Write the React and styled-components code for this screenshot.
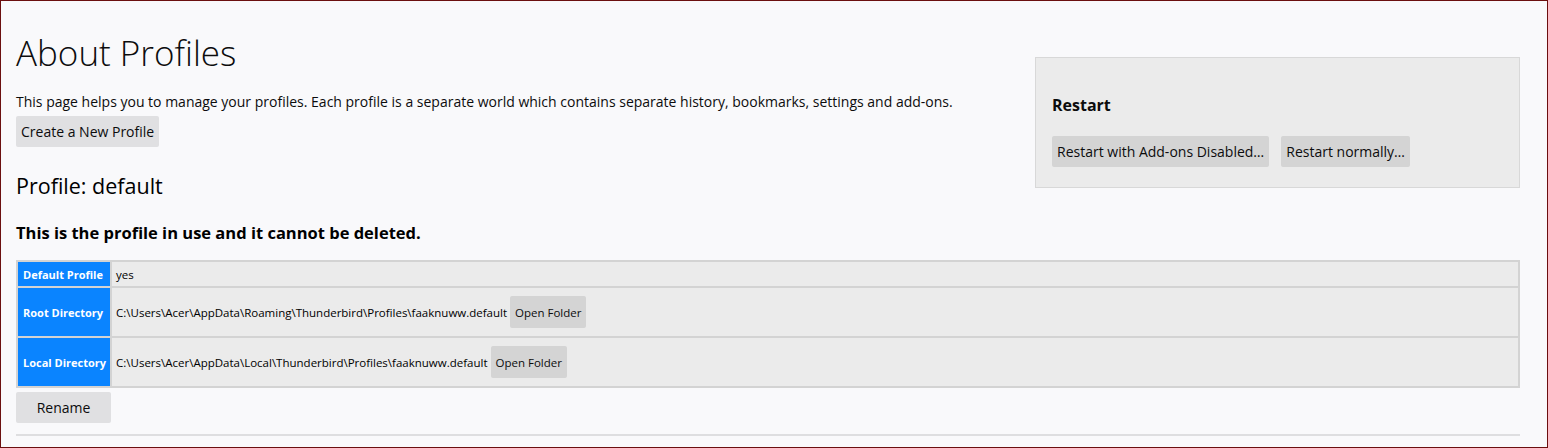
import React from 'react';
import styled, { createGlobalStyle } from 'styled-components';

const GlobalStyle = createGlobalStyle`
  html, body {
    margin: 0;
    padding: 0;
    background: #f9f9fb;
  }
  body {
    font-family: "Segoe UI", "Open Sans", sans-serif;
    color: #0c0c0d;
  }
`;

const Frame = styled.div`
  box-sizing: border-box;
  width: 1548px;
  height: 448px;
  border: 1px solid #6b0f0f;
  padding: 0 27px 0 15px;
  background: #f9f9fb;
  overflow: hidden;
`;

const Intro = styled.div`
  display: flex;
  flex-direction: column;
  align-items: flex-start;
`;

const Title = styled.h1`
  margin: 28px 0 0;
  font-size: 35px;
  font-weight: 300;
  line-height: 48px;
`;

const Lead = styled.p`
  margin: 15px 0 4px;
  font-size: 14px;
  line-height: 20px;
`;

const Button = styled.button`
  font-family: inherit;
  font-size: ${p => (p.small ? '11.5px' : '14px')};
  color: #0c0c0d;
  background: ${p => (p.dark ? '#d4d4d4' : '#e0e0e2')};
  border: none;
  border-radius: 2px;
  padding: 0 5px;
  height: ${p => (p.small ? '32px' : '31px')};
  min-width: ${p => p.min || 'auto'};
  cursor: pointer;
`;

const RestartBox = styled.section`
  float: right;
  box-sizing: border-box;
  width: 485px;
  margin-top: 56px;
  padding: 26px 16px 20px;
  background: #ebebeb;
  border: 1px solid #d8d8d8;
`;

const BoxHeading = styled.h3`
  margin: 10px 0 20px;
  font-size: 16px;
  font-weight: 700;
  line-height: 22px;
`;

const ButtonRow = styled.div`
  display: flex;
  gap: 12px;
`;

const ProfileName = styled.h2`
  margin: 23px 0 0;
  font-size: 21.5px;
  font-weight: 400;
  line-height: 32px;
  color: #000;
`;

const Notice = styled.h3`
  margin: 19px 0 15px;
  font-size: 16.5px;
  font-weight: 700;
  line-height: 24px;
  color: #000;
`;

const Table = styled.table`
  width: 100%;
  border-collapse: collapse;
  border: 2px solid #d3d3d3;
  font-size: 11.5px;
  color: #000;
`;

const Head = styled.th`
  background: #0a84ff;
  color: #fff;
  font-size: 11px;
  font-weight: 700;
  text-align: left;
  white-space: nowrap;
  padding: 0 4px 0 5px;
  width: 83px;
  height: ${p => p.h};
  border-bottom: 2px solid #d3d3d3;
  border-right: 2px solid #d3d3d3;
`;

const Cell = styled.td`
  background: #ebebeb;
  padding: 0 4px;
  height: ${p => p.h};
  border-bottom: 2px solid #d3d3d3;
`;

const CellInner = styled.div`
  display: flex;
  align-items: center;
  gap: 3px;
`;

const Footer = styled.div`
  margin-top: 4px;
  padding-bottom: 11px;
  border-bottom: 2px solid #dedee0;
`;

const rows = [
  { label: 'Default Profile', value: 'yes', h: '24px' },
  {
    label: 'Root Directory',
    value: 'C:\\Users\\Acer\\AppData\\Roaming\\Thunderbird\\Profiles\\faaknuww.default',
    folder: true,
    h: '48px',
  },
  {
    label: 'Local Directory',
    value: 'C:\\Users\\Acer\\AppData\\Local\\Thunderbird\\Profiles\\faaknuww.default',
    folder: true,
    h: '48px',
  },
];

export default function App() {
  return (
    <>
      <GlobalStyle />
      <Frame>
        <RestartBox>
          <BoxHeading>Restart</BoxHeading>
          <ButtonRow>
            <Button dark>Restart with Add-ons Disabled…</Button>
            <Button dark>Restart normally…</Button>
          </ButtonRow>
        </RestartBox>
        <Intro>
          <Title>About Profiles</Title>
          <Lead>
            This page helps you to manage your profiles. Each profile is a separate world which
            contains separate history, bookmarks, settings and add-ons.
          </Lead>
          <Button>Create a New Profile</Button>
        </Intro>
        <ProfileName>Profile: default</ProfileName>
        <Notice>This is the profile in use and it cannot be deleted.</Notice>
        <Table>
          <tbody>
            {rows.map(r => (
              <tr key={r.label}>
                <Head h={r.h}>{r.label}</Head>
                <Cell h={r.h}>
                  <CellInner>
                    <span>{r.value}</span>
                    {r.folder && (
                      <Button small dark>
                        Open Folder
                      </Button>
                    )}
                  </CellInner>
                </Cell>
              </tr>
            ))}
          </tbody>
        </Table>
        <Footer>
          <Button min="95px">Rename</Button>
        </Footer>
      </Frame>
    </>
  );
}
